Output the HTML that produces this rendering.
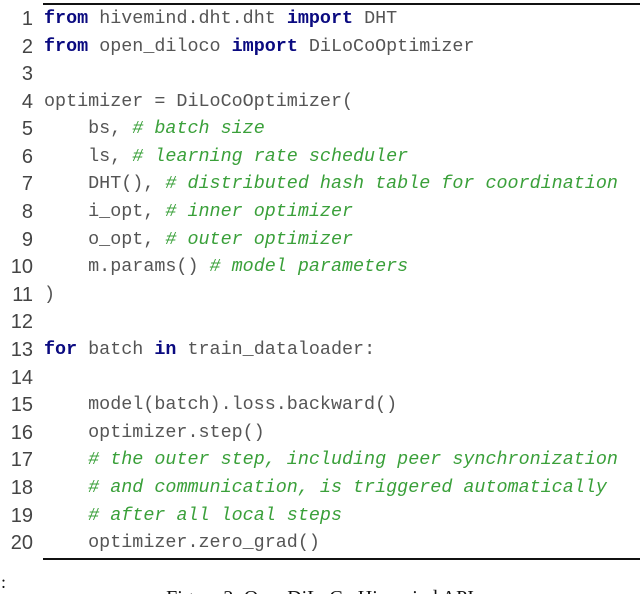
<!DOCTYPE html>
<html><head><meta charset="utf-8"><style>
html,body{margin:0;padding:0;background:#fff;width:640px;height:594px;overflow:hidden;position:relative}
.rule{position:absolute;left:43px;right:0;height:2px;background:#111}
.ln{position:absolute;left:0;width:33px;text-align:right;font-family:"Liberation Sans",sans-serif;font-size:20px;color:#444;line-height:20px}
.code{position:absolute;left:44px;font-family:"Liberation Mono",monospace;font-size:18.4px;color:#555;white-space:pre;line-height:20px}
.k{color:#0a0a80;font-weight:bold}
.c{color:#3aa03a;font-style:italic}
.cap{position:absolute;left:0;right:0;top:587px;text-align:center;font-family:"Liberation Serif",serif;font-size:20px;color:#111}
</style></head><body>
<div class="rule" style="top:3px"></div>
<div class="rule" style="top:558px"></div>
<div class="ln" style="top:9px">1</div><div class="code" style="top:9px"><span class="k">from</span> hivemind.dht.dht <span class="k">import</span> DHT</div>
<div class="ln" style="top:37px">2</div><div class="code" style="top:37px"><span class="k">from</span> open_diloco <span class="k">import</span> DiLoCoOptimizer</div>
<div class="ln" style="top:64px">3</div>
<div class="ln" style="top:92px">4</div><div class="code" style="top:92px">optimizer = DiLoCoOptimizer(</div>
<div class="ln" style="top:119px">5</div><div class="code" style="top:119px">    bs, <span class="c"># batch size</span></div>
<div class="ln" style="top:147px">6</div><div class="code" style="top:147px">    ls, <span class="c"># learning rate scheduler</span></div>
<div class="ln" style="top:174px">7</div><div class="code" style="top:174px">    DHT(), <span class="c"># distributed hash table for coordination</span></div>
<div class="ln" style="top:202px">8</div><div class="code" style="top:202px">    i_opt, <span class="c"># inner optimizer</span></div>
<div class="ln" style="top:230px">9</div><div class="code" style="top:230px">    o_opt, <span class="c"># outer optimizer</span></div>
<div class="ln" style="top:257px">10</div><div class="code" style="top:257px">    m.params() <span class="c"># model parameters</span></div>
<div class="ln" style="top:285px">11</div><div class="code" style="top:285px">)</div>
<div class="ln" style="top:312px">12</div>
<div class="ln" style="top:340px">13</div><div class="code" style="top:340px"><span class="k">for</span> batch <span class="k">in</span> train_dataloader:</div>
<div class="ln" style="top:368px">14</div>
<div class="ln" style="top:395px">15</div><div class="code" style="top:395px">    model(batch).loss.backward()</div>
<div class="ln" style="top:423px">16</div><div class="code" style="top:423px">    optimizer.step()</div>
<div class="ln" style="top:450px">17</div><div class="code" style="top:450px">    <span class="c"># the outer step, including peer synchronization</span></div>
<div class="ln" style="top:478px">18</div><div class="code" style="top:478px">    <span class="c"># and communication, is triggered automatically</span></div>
<div class="ln" style="top:506px">19</div><div class="code" style="top:506px">    <span class="c"># after all local steps</span></div>
<div class="ln" style="top:533px">20</div><div class="code" style="top:533px">    optimizer.zero_grad()</div>
<div style="position:absolute;left:1px;top:572px;font-family:'Liberation Serif',serif;font-size:18px;color:#111">:</div>
<div class="cap">Figure 2: OpenDiLoCo Hivemind API</div>
</body></html>
